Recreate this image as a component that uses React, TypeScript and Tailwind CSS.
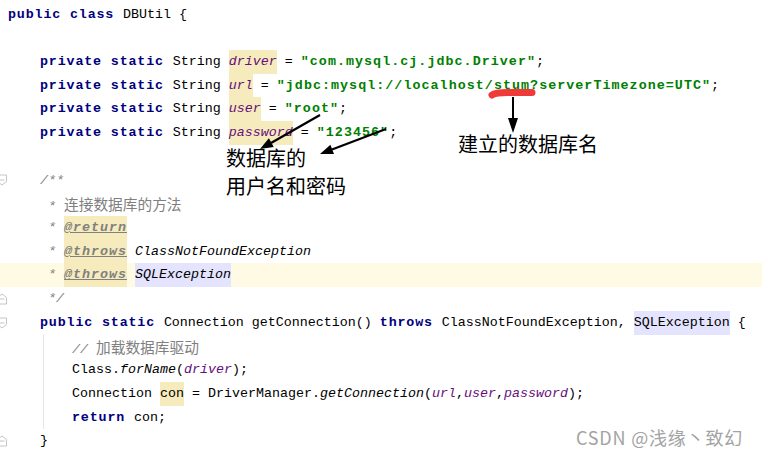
import type { ReactNode } from 'react';

const K = ({ children }: { children: ReactNode }) => (
  <span className="font-bold text-[#000080] tracking-[0.85px]">{children}</span>
);

const S = ({ children }: { children: ReactNode }) => (
  <span className="font-bold text-[#008000] tracking-[1.05px]">{children}</span>
);

const F = ({ children, hl }: { children: ReactNode; hl?: boolean }) => (
  <span className={`italic text-[#660e7a] ${hl ? 'inline-block bg-[#f6ebbc]' : ''}`}>{children}</span>
);

const C = ({ children }: { children: ReactNode }) => (
  <span className="italic text-[#808080]">{children}</span>
);

const Cn = ({ children }: { children: ReactNode }) => (
  <span className="font-['Noto_Sans_CJK_SC',sans-serif] text-[14.7px] text-[#808080]">{children}</span>
);

const Tag = ({ children }: { children: ReactNode }) => (
  <span className="inline-block bg-[#f6ebbc] font-bold italic underline text-[#808080] tracking-[1px]">{children}</span>
);

const FoldIcon = ({ end }: { end?: boolean }) => (
  <svg width="12" height="12" viewBox="0 0 12 12" className="-ml-[4px] shrink-0">
    {end ? (
      <path d="M1.5 4.5 L6 1 L10.5 4.5 V11 H1.5 Z" fill="white" stroke="#c4c4c4" />
    ) : (
      <path d="M1.5 1 H10.5 V7.5 L6 11 L1.5 7.5 Z" fill="white" stroke="#c4c4c4" />
    )}
    <path d="M3.5 6 H8.5" stroke="#c4c4c4" />
  </svg>
);

const Line = ({
  children,
  fold,
  className = '',
}: {
  children?: ReactNode;
  fold?: 'start' | 'end';
  className?: string;
}) => (
  <div className={`flex h-[23.72px] leading-[23.72px] whitespace-pre ${className}`}>
    <div className="w-[8px] shrink-0 flex items-center overflow-visible">
      {fold && <FoldIcon end={fold === 'end'} />}
    </div>
    <div>{children}</div>
  </div>
);

export default function App() {
  return (
    <div className="relative w-[762px] h-[456px] overflow-hidden bg-white pt-[2.5px] text-black font-['Liberation_Mono','Noto_Sans_CJK_SC',monospace] text-[13.33px]">
      <Line>
        <K>public class </K>DBUtil {'{'}
      </Line>
      <Line />
      <Line>
        {'    '}
        <K>private static </K>String <F hl>driver</F> = <S>"com.mysql.cj.jdbc.Driver"</S>;
      </Line>
      <Line>
        {'    '}
        <K>private static </K>String <F hl>url</F> = <S>"jdbc:mysql://localhost/stum?serverTimezone=UTC"</S>;
      </Line>
      <Line>
        {'    '}
        <K>private static </K>String <F hl>user</F> = <S>"root"</S>;
      </Line>
      <Line>
        {'    '}
        <K>private static </K>String <F hl>password</F> = <S>"123456"</S>;
      </Line>
      <Line />
      <Line fold="start">
        {'    '}
        <C>/**</C>
      </Line>
      <Line>
        {'     '}
        <C>* </C>
        <Cn>连接数据库的方法</Cn>
      </Line>
      <Line>
        {'     '}
        <C>* </C>
        <Tag>@return</Tag>
      </Line>
      <Line>
        {'     '}
        <C>* </C>
        <Tag>@throws</Tag> <span className="italic">ClassNotFoundException</span>
      </Line>
      <Line className="bg-[#fffae3]">
        {'     '}
        <C>* </C>
        <Tag>@throws</Tag> <span className="inline-block italic bg-[#e4e4ff]">SQLException</span>
      </Line>
      <Line fold="end">
        {'     '}
        <C>*/</C>
      </Line>
      <Line fold="start">
        {'    '}
        <K>public static </K>Connection getConnection() <K>throws </K>ClassNotFoundException,{' '}
        <span className="inline-block bg-[#e4e4ff]">SQLException</span> {'{'}
      </Line>

      {/* method body with indent guide */}
      <div className="flex">
        <div className="w-[43px] shrink-0" />
        <div className="border-l border-[#e6e6e6] pl-[28px]">
          <div className="h-[23.72px] leading-[23.72px] whitespace-pre">
            <C>// </C>
            <Cn>加载数据库驱动</Cn>
          </div>
          <div className="h-[23.72px] leading-[23.72px] whitespace-pre">
            Class.<span className="italic">forName</span>(<F>driver</F>);
          </div>
          <div className="h-[23.72px] leading-[23.72px] whitespace-pre">
            Connection <span className="inline-block bg-[#f6ebbc]">con</span> = DriverManager.
            <span className="italic">getConnection</span>(<F>url</F>,<F>user</F>,<F>password</F>);
          </div>
          <div className="h-[23.72px] leading-[23.72px] whitespace-pre">
            <K>return </K>con;
          </div>
        </div>
      </div>
      <Line fold="end">{'    }'}</Line>

      {/* hand-drawn annotations */}
      <svg className="absolute inset-0 pointer-events-none" width="762" height="456" viewBox="0 0 762 456">
        <path d="M492 95 Q496 92 512 92.5 L532 92.5" stroke="#f03a3a" strokeWidth="7" strokeLinecap="round" fill="none" />
        <path d="M513 97 L513 120" stroke="#000" strokeWidth="2" />
        <polygon points="508,118 518,118 513,133" fill="#000" />
        <path d="M320 115 L271 143" stroke="#000" strokeWidth="2.2" />
        <polygon points="273.7,147 268.9,138.3 260,149" fill="#000" />
        <path d="M386 129 L332 149.5" stroke="#000" strokeWidth="2.2" />
        <polygon points="334,154.1 330.4,144.7 320,154" fill="#000" />
      </svg>
      <div className="absolute left-[458px] top-[133px] font-['Noto_Sans_CJK_SC',sans-serif] text-[20px] leading-[22px] text-black whitespace-nowrap">
        建立的数据库名
      </div>
      <div className="absolute left-[226px] top-[144px] font-['Noto_Sans_CJK_SC',sans-serif] text-[20px] leading-[28px] text-black whitespace-nowrap">
        <div>数据库的</div>
        <div>用户名和密码</div>
      </div>
      <div className="absolute left-[576px] top-[425px] font-['Noto_Sans_CJK_SC',sans-serif] text-[18px] leading-[24px] tracking-[0.8px] text-[#a3a3a3] whitespace-nowrap">
        CSDN @浅缘丶致幻
      </div>
    </div>
  );
}
